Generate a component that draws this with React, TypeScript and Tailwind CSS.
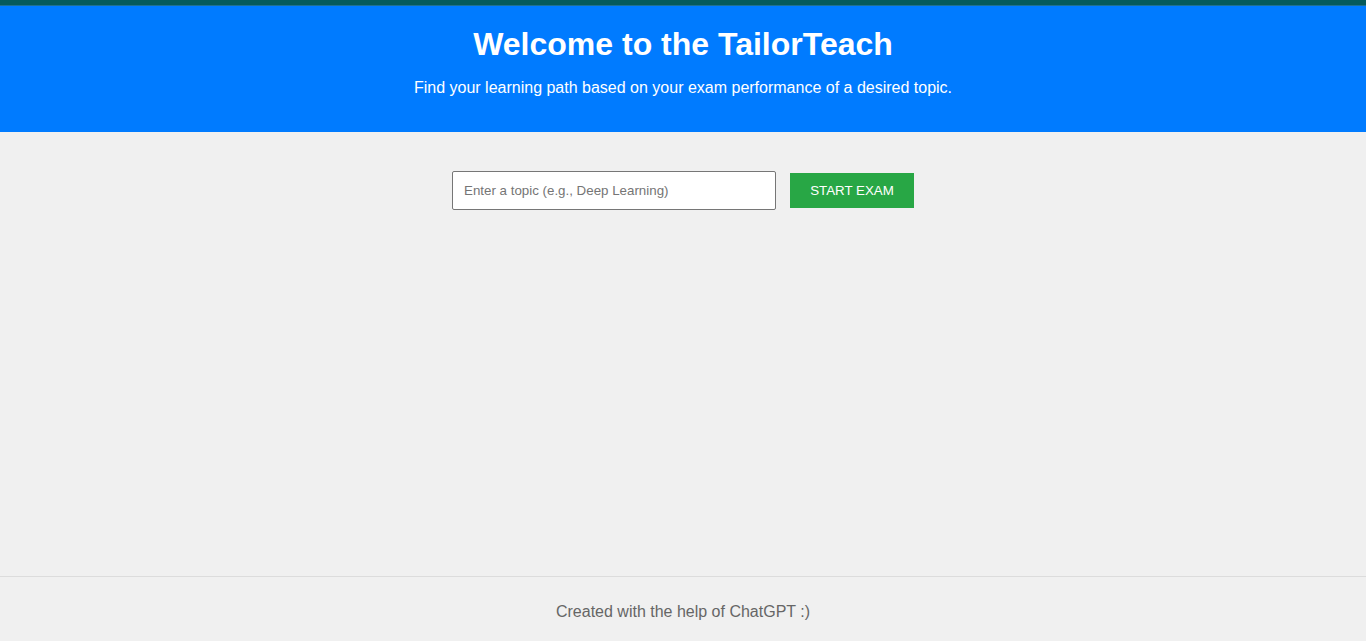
export default function App() {
  return (
    <div className="min-h-screen flex flex-col bg-[#f0f0f0] font-['Liberation_Sans',Arial,sans-serif]">
      <div className="h-[5px] bg-[#055a5a]" />
      <div className="h-px bg-[#1f7090]" />
      <header className="bg-[#007bff] text-white text-center pt-5 pb-[35px]">
        <h1 className="text-[32px] leading-[37px] font-bold">Welcome to the TailorTeach</h1>
        <p className="mt-4 text-base leading-[18px]">
          Find your learning path based on your exam performance of a desired topic.
        </p>
      </header>

      <main className="flex items-center justify-center gap-[14px] pt-[39px]">
        <input
          type="text"
          placeholder="Enter a topic (e.g., Deep Learning)"
          className="w-[324px] h-[39px] px-[11px] bg-white border border-[#767676] rounded-[2px] text-[13.33px] placeholder:text-[#757575] outline-none"
        />
        <button className="w-[124px] h-[35px] bg-[#28a745] text-white text-[13.33px] uppercase">
          Start Exam
        </button>
      </main>

      <footer className="mt-auto border-t border-[#dcdcdc] text-center pt-[26px] pb-[20px]">
        <p className="text-base leading-[18px] text-[#666]">Created with the help of ChatGPT :)</p>
      </footer>
    </div>
  );
}
